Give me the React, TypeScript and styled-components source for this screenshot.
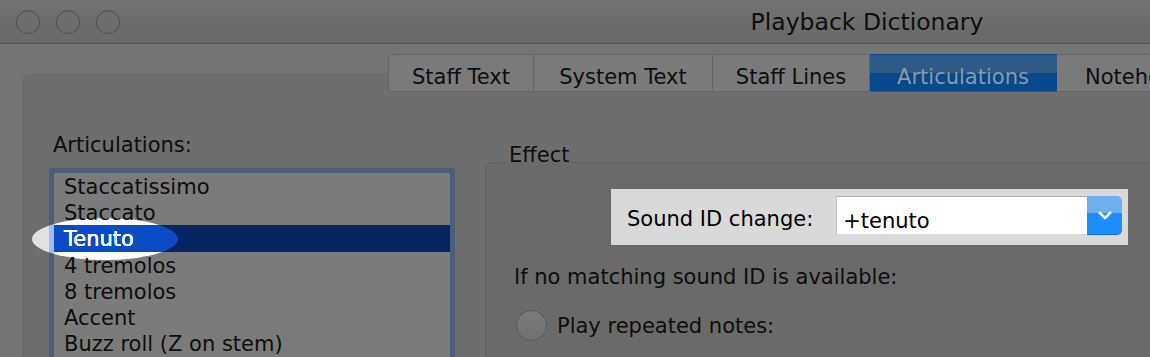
import React from 'react';
import styled, { createGlobalStyle } from 'styled-components';

const GlobalStyle = createGlobalStyle`
  html, body {
    margin: 0;
    padding: 0;
    background: #757575;
    overflow: hidden;
  }
  body {
    font-family: "DejaVu Sans", "Liberation Sans", sans-serif;
    color: #0d0d0d;
  }
`;

const Window = styled.div`
  width: 1734px;
  height: 357px;
  background: #757575;
  display: flex;
  flex-direction: column;
`;

const TitleBar = styled.div`
  height: 43px;
  flex-shrink: 0;
  border-bottom: 1px solid #515151;
  background: linear-gradient(#737373, #686868);
  display: grid;
  grid-template-columns: 1fr auto 1fr;
  align-items: center;
`;

const Lights = styled.div`
  display: flex;
  gap: 16px;
  padding-left: 16px;
`;

const Light = styled.span`
  width: 22px;
  height: 22px;
  border-radius: 50%;
  border: 1px solid #4e4e4e;
  background: #6d6d6d;
`;

const Title = styled.div`
  font-size: 23.5px;
  line-height: 26px;
  color: #0d0d0d;
`;

const Body = styled.div`
  padding: 10px 23px 0;
  display: flex;
  flex-direction: column;
`;

const TabBar = styled.div`
  display: flex;
  margin-left: 365px;
  height: 38px;
  position: relative;
  z-index: 1;
`;

const Tab = styled.div<{ $w: number; $active?: boolean; $first?: boolean }>`
  width: ${p => p.$w}px;
  box-sizing: border-box;
  flex-shrink: 0;
  display: flex;
  align-items: center;
  justify-content: center;
  padding-top: 7px;
  font-size: 21px;
  border: 1px solid ${p => (p.$active ? 'transparent' : '#646464')};
  border-left: ${p => (p.$first ? '1px solid #646464' : 'none')};
  border-radius: ${p => (p.$first ? '5px 0 0 5px' : '0')};
  background: ${p =>
    p.$active ? 'linear-gradient(#2e5b87 0 50%, #064a8c 50%)' : '#7a7a7a'};
  color: ${p => (p.$active ? '#8d99a6' : '#0d0d0d')};
`;

const Panel = styled.div`
  margin-top: -18px;
  background: #6e6e6e;
  border: 1px solid #686868;
  border-radius: 6px;
  padding: 58px 0 0 25px;
  height: 400px;
  display: flex;
  gap: 30px;
  align-items: flex-start;
`;

const ListColumn = styled.div`
  width: 406px;
  flex-shrink: 0;
  display: flex;
  flex-direction: column;
`;

const FieldLabel = styled.div`
  font-size: 21px;
  line-height: 24px;
  padding-left: 4px;
  margin-bottom: 11px;
`;

const ListBox = styled.div`
  border: 5px solid #4b5d78;
  border-radius: 3px;
  background: #7b7b7b;
  height: 300px;
`;

const Row = styled.div<{ $selected?: boolean }>`
  height: 26.2px;
  line-height: 29px;
  padding-left: 10px;
  font-size: 21px;
  white-space: nowrap;
  position: relative;
  background: ${p => (p.$selected ? '#052560' : 'transparent')};
  color: ${p => (p.$selected ? '#ffffff' : '#0d0d0d')};
`;

const Spotlight = styled.span`
  position: absolute;
  left: -22px;
  top: -7px;
  width: 146px;
  height: 42px;
  border-radius: 50%;
  backdrop-filter: brightness(2.05);
  z-index: 2;
`;

const Group = styled.fieldset`
  flex: 1;
  margin: 10px 0 0;
  padding: 0;
  border: 1px solid #5f5f5f;
  border-radius: 6px;
  background: #6a6a6a;
  height: 300px;
  min-width: 0;
`;

const Legend = styled.legend`
  font-size: 21px;
  line-height: 24px;
  margin-left: 21px;
  padding: 0 2px 14px;
`;

const GroupContent = styled.div`
  padding-left: 28px;
  display: flex;
  flex-direction: column;
  align-items: flex-start;
`;

const HighlightRow = styled.div`
  margin: 8px 0 0 97px;
  width: 517px;
  height: 56px;
  box-sizing: border-box;
  background: #d9d9d9;
  display: flex;
  align-items: flex-start;
  padding: 7px 5px 0 16px;
  gap: 23px;
`;

const RowLabel = styled.div`
  font-size: 21px;
  line-height: 24px;
  margin-top: 11px;
  color: #000;
  white-space: nowrap;
`;

const Combo = styled.div`
  width: 286px;
  height: 39px;
  display: flex;
`;

const ComboField = styled.div`
  flex: 1;
  background: #fff;
  border-top: 1px solid #ababab;
  border-left: 1px solid #c4c4c4;
  border-bottom: 1px solid #dcdcdc;
  padding: 12px 0 0 6px;
  font-size: 21px;
  line-height: 24px;
  color: #000;
`;

const ComboButton = styled.div`
  width: 35px;
  border-radius: 0 5px 5px 0;
  background: linear-gradient(#6db0ef 0 46%, #1a8dff 46%);
  border-bottom: 1px solid #0a6be0;
  display: flex;
  align-items: center;
  justify-content: center;
`;

const Note = styled.div`
  margin-top: 20px;
  font-size: 21px;
  line-height: 24px;
`;

const RadioRow = styled.label`
  margin-top: 21px;
  margin-left: 2px;
  display: flex;
  align-items: center;
  gap: 10px;
  font-size: 21px;
  line-height: 24px;
`;

const RadioDot = styled.span`
  width: 29px;
  height: 29px;
  border-radius: 50%;
  border: 1px solid #575757;
  background: linear-gradient(#7c7c7c, #717171);
`;

const tabs = [
  { label: 'Staff Text', w: 146 },
  { label: 'System Text', w: 179 },
  { label: 'Staff Lines', w: 157 },
  { label: 'Articulations', w: 187, active: true },
  { label: 'Noteheads', w: 170 },
  { label: 'Dynamics', w: 160 },
];

const articulations = [
  'Staccatissimo',
  'Staccato',
  'Tenuto',
  '4 tremolos',
  '8 tremolos',
  'Accent',
  'Buzz roll (Z on stem)',
  'Marcato',
  'Fermata',
];

export default function App() {
  return (
    <>
      <GlobalStyle />
      <Window>
        <TitleBar>
          <Lights>
            <Light />
            <Light />
            <Light />
          </Lights>
          <Title>Playback Dictionary</Title>
          <div />
        </TitleBar>
        <Body>
          <TabBar>
            {tabs.map((t, i) => (
              <Tab key={t.label} $w={t.w} $active={t.active} $first={i === 0}>
                {t.label}
              </Tab>
            ))}
          </TabBar>
          <Panel>
            <ListColumn>
              <FieldLabel>Articulations:</FieldLabel>
              <ListBox>
                {articulations.map(a => (
                  <Row key={a} $selected={a === 'Tenuto'}>
                    {a}
                    {a === 'Tenuto' && <Spotlight />}
                  </Row>
                ))}
              </ListBox>
            </ListColumn>
            <Group>
              <Legend>Effect</Legend>
              <GroupContent>
                <HighlightRow>
                  <RowLabel>Sound ID change:</RowLabel>
                  <Combo>
                    <ComboField>+tenuto</ComboField>
                    <ComboButton>
                      <svg width="16" height="10" viewBox="0 0 16 10">
                        <path d="M2 2 L8 8 L14 2" fill="none" stroke="#fff" strokeWidth="2.6" />
                      </svg>
                    </ComboButton>
                  </Combo>
                </HighlightRow>
                <Note>If no matching sound ID is available:</Note>
                <RadioRow>
                  <RadioDot />
                  Play repeated notes:
                </RadioRow>
              </GroupContent>
            </Group>
          </Panel>
        </Body>
      </Window>
    </>
  );
}
